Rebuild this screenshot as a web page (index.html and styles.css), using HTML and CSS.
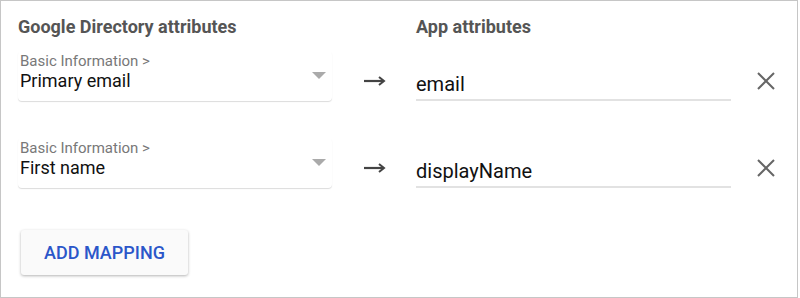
FILE: index.html
```html
<!DOCTYPE html>
<html lang="en">
<head>
    <meta charset="UTF-8">
    <title>Attribute mapping</title>
    <link rel="stylesheet" href="styles.css">
</head>
<body>
    <div class="panel">
        <div class="row header-row">
            <h2 class="col-title">Google Directory attributes</h2>
            <div></div>
            <h2 class="col-title">App attributes</h2>
        </div>

        <div class="row mapping-row">
            <div class="dropdown">
                <div class="dropdown-text">
                    <span class="dropdown-label">Basic Information &gt;</span>
                    <span class="dropdown-value">Primary email</span>
                </div>
                <span class="caret"></span>
            </div>
            <div class="arrow">
                <svg width="22" height="10" viewBox="0 0 22 10"><path d="M0 5h19" stroke="#444" stroke-width="2.2"/><path d="M15 1l5 4-5 4" fill="none" stroke="#444" stroke-width="2"/></svg>
            </div>
            <div class="field">email</div>
            <button class="remove" title="Remove">
                <svg width="18" height="18" viewBox="0 0 18 18"><path d="M1 1l16 16M17 1L1 17" stroke="#666" stroke-width="2"/></svg>
            </button>
        </div>

        <div class="row mapping-row">
            <div class="dropdown">
                <div class="dropdown-text">
                    <span class="dropdown-label">Basic Information &gt;</span>
                    <span class="dropdown-value">First name</span>
                </div>
                <span class="caret"></span>
            </div>
            <div class="arrow">
                <svg width="22" height="10" viewBox="0 0 22 10"><path d="M0 5h19" stroke="#444" stroke-width="2.2"/><path d="M15 1l5 4-5 4" fill="none" stroke="#444" stroke-width="2"/></svg>
            </div>
            <div class="field">displayName</div>
            <button class="remove" title="Remove">
                <svg width="18" height="18" viewBox="0 0 18 18"><path d="M1 1l16 16M17 1L1 17" stroke="#666" stroke-width="2"/></svg>
            </button>
        </div>

        <button class="add-btn">ADD MAPPING</button>
    </div>
</body>
</html>
```

FILE: styles.css
```css
body {
    margin: 0;
    font-family: Roboto, "Liberation Sans", sans-serif;
    background-color: #fff;
}
.panel {
    width: 798px;
    height: 298px;
    box-sizing: border-box;
    border: 1px solid #c6c6c6;
    padding: 15px 0 0 17px;
    display: flex;
    flex-direction: column;
    align-items: flex-start;
}
.row {
    display: grid;
    grid-template-columns: 314px 84px 315px 66px;
}
.header-row {
    margin-bottom: 14px;
}
.mapping-row {
    height: 50px;
    margin-bottom: 37px;
}
.col-title {
    margin: 0;
    font-size: 18px;
    line-height: 21px;
    font-weight: bold;
    color: #555;
}
.dropdown {
    display: flex;
    align-items: center;
    padding: 2px 0 9px 2px;
    border-radius: 4px;
    box-shadow: 0 1px 1px rgba(0, 0, 0, 0.14);
}
.dropdown-text {
    flex: 1;
    display: flex;
    flex-direction: column;
}
.dropdown-label {
    font-size: 15px;
    line-height: 17px;
    color: #787878;
}
.dropdown-value {
    font-size: 18px;
    line-height: 22px;
    color: #111;
}
.caret {
    width: 0;
    height: 0;
    margin: 6px 6px 0 0;
    border-left: 7.5px solid transparent;
    border-right: 7.5px solid transparent;
    border-top: 7px solid #aaa;
}
.arrow {
    display: flex;
    justify-content: center;
    align-items: flex-start;
    padding: 25px 0 0 2px;
}
.field {
    align-self: end;
    font-size: 20px;
    line-height: 24px;
    color: #111;
    padding-bottom: 3px;
    border-bottom: 2px solid #e2e2e2;
}
.remove {
    align-self: start;
    justify-self: start;
    margin: 21px 0 0 26px;
    padding: 0;
    border: none;
    background: none;
    cursor: pointer;
    display: flex;
}
.add-btn {
    margin: 5px 0 0 3px;
    width: 167px;
    height: 45px;
    font-family: Roboto, "Liberation Sans", sans-serif;
    font-size: 18px;
    font-weight: 500;
    color: #2b56c9;
    background-color: #fafafa;
    border: none;
    border-radius: 3px;
    box-shadow: 0 1px 3px rgba(0, 0, 0, 0.3);
    cursor: pointer;
}
```
